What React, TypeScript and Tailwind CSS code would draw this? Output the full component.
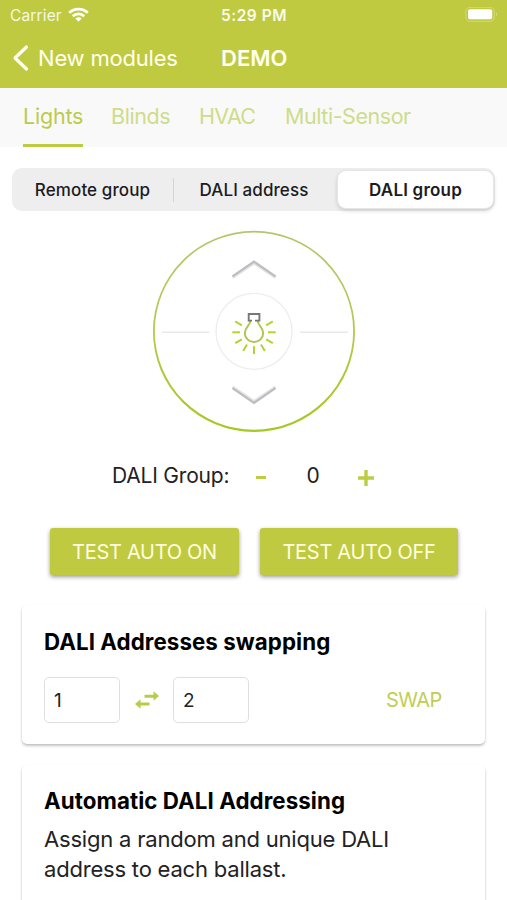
import React from "react";

function Rays() {
  const angles = [-30, 0, 30, 60, 90, 120, 150, 180, 210];
  return (
    <g stroke="#b9d12f" strokeWidth="2">
      {angles.map((a) => {
        const r = (a * Math.PI) / 180;
        return (
          <line
            key={a}
            x1={101 + 14 * Math.cos(r)}
            y1={102 + 14 * Math.sin(r)}
            x2={101 + 21.7 * Math.cos(r)}
            y2={102 + 21.7 * Math.sin(r)}
          />
        );
      })}
    </g>
  );
}

function Dial() {
  return (
    <svg width="204" height="204" viewBox="0 0 204 204" fill="none" className="block">
      <defs>
        <linearGradient id="ring" x1="0" y1="0" x2="0" y2="1">
          <stop offset="0" stopColor="#b4c66c" />
          <stop offset="0.5" stopColor="#b4ca50" />
          <stop offset="1" stopColor="#a6c820" />
        </linearGradient>
      </defs>
      <path
        fill="url(#ring)"
        fillRule="evenodd"
        d="M102 1.8a101 100.6 0 1 1 0 201.2a101 100.6 0 1 1 0-201.2zM102 3.5a99.2 98.6 0 1 0 0 197.2a99.2 98.6 0 1 0 0-197.2z"
      />
      <circle cx="102" cy="102.4" r="38" stroke="#ededed" strokeWidth="1.3" />
      <path d="M10 103.2H57.5M148 103.2H196" stroke="#e9e9e9" strokeWidth="1.4" />
      <path d="M80.5 48.5L102 34L123.5 48.5" stroke="#e3e3e5" strokeWidth="3" />
      <path d="M80.5 47.3L102 32.6L123.5 47.3" stroke="#bdbdc1" strokeWidth="2.2" />
      <path d="M80.5 158L102 172.6L123.5 158" stroke="#e3e3e5" strokeWidth="3" />
      <path d="M80.5 159.2L102 173.8L123.5 159.2" stroke="#bdbdc1" strokeWidth="2.2" />
      <g transform="translate(1 1.3)">
        <Rays />
        <path
          d="M97.4 90.5C97.4 95 91.8 97 91.8 102.6A9.2 9.2 0 0 0 110.2 102.6C110.2 97 104.6 95 104.6 90.5"
          stroke="#afc64f"
          strokeWidth="2"
        />
        <path d="M99 90.3H95.7V83.7H106.4V90.3H102" stroke="#77777b" strokeWidth="1.9" />
      </g>
    </svg>
  );
}

function StatusBar() {
  return (
    <div className="grid h-[30px] grid-cols-3 items-center pl-2.5 pr-[9px]">
      <div className="flex items-center gap-1.5 text-[15.5px] tracking-[0.15px] text-white/85">
        <span className="w-[52px] whitespace-nowrap pt-px">Carrier</span>
        <svg width="21" height="16" viewBox="0 0 21 16" fill="none" stroke="#fff" strokeWidth="2.7">
          <path d="M1.2 5.8C6.4 0.8 14.6 0.8 19.8 5.8" />
          <path d="M4.7 9.2C8 6.2 13 6.2 16.3 9.2" />
          <path d="M7.3 11.4C9.1 9.8 11.9 9.8 13.7 11.4L10.5 14.8Z" fill="#fff" stroke="none" />
        </svg>
      </div>
      <span className="whitespace-nowrap pt-px text-center text-[15.5px] font-semibold tracking-[0.5px] text-white/90">
        5:29 PM
      </span>
      <svg width="33" height="16" viewBox="0 0 33 16" fill="none" className="justify-self-end">
        <rect x="0.8" y="0.3" width="28.5" height="14" rx="4.2" stroke="#fff" strokeOpacity="0.3" />
        <rect x="3" y="2.3" width="24.2" height="10" rx="2" fill="#fff" />
        <path d="M31 5Q33 7.3 31 9.5Z" fill="#fff" fillOpacity="0.4" />
      </svg>
    </div>
  );
}

function Header() {
  return (
    <header className="h-[88px] bg-[#bfca40] text-[#fffff0]">
      <StatusBar />
      <div className="flex h-14 items-center pl-3">
        <svg width="17" height="28" viewBox="0 0 17 28" fill="none" stroke="#fffff4" strokeWidth="3.2" strokeLinecap="round" strokeLinejoin="round">
          <path d="M14.5 3L3 14L14.5 25" />
        </svg>
        <span className="ml-[9px] w-[183px] whitespace-nowrap text-[22px] tracking-[-0.2px]">New modules</span>
        <span className="whitespace-nowrap text-[22px] font-semibold">DEMO</span>
      </div>
    </header>
  );
}

function Tabs() {
  return (
    <nav className="flex h-[59px] bg-[#f9f9f9] pl-[23px] text-[21.5px] tracking-[-0.4px] text-[#cfdc89]">
      <span className="mr-7 flex w-[60px] items-center whitespace-nowrap border-b-3 border-[#bccb3f] pt-px tracking-[-0.2px] text-[#bccb4a]">
        Lights
      </span>
      <span className="flex w-[88px] items-center whitespace-nowrap pb-0.5">Blinds</span>
      <span className="flex w-[86px] items-center whitespace-nowrap pb-0.5 tracking-[-0.7px]">HVAC</span>
      <span className="flex items-center whitespace-nowrap pb-0.5 tracking-[-0.45px]">Multi-Sensor</span>
    </nav>
  );
}

function Segments() {
  return (
    <div className="mx-3 mt-[21px] flex h-[43px] items-center rounded-[10px] bg-[#eeeeef] text-[17px] font-medium tracking-[0.1px] text-[#1c1c1e]">
      <span className="w-[161px] whitespace-nowrap pt-0.5 text-center">Remote group</span>
      <span className="h-6 w-px bg-[#d4d4d6]" />
      <span className="w-40 whitespace-nowrap pt-0.5 text-center">DALI address</span>
      <span className="ml-[3px] flex h-[39px] w-[157px] items-center justify-center whitespace-nowrap rounded-[9px] border border-[#e6e6e6] bg-white pt-0.5 font-semibold tracking-[0.2px] shadow-[0_2px_4px_rgba(0,0,0,0.14)]">
        DALI group
      </span>
    </div>
  );
}

function SwapIcon() {
  return (
    <svg width="24" height="18" viewBox="0 0 24 18" fill="#b7cd45" className="block">
      <path d="M9.5 3.7H18.5V0.3L24 5.1L18.5 9.8V6.7H9.5Z" />
      <path d="M14.5 11.6H5.5V8.2L0 13L5.5 17.7V14.6H14.5Z" />
    </svg>
  );
}

const card = "mx-[22px] rounded-[5px] bg-white px-[22px] shadow-[0_2px_3px_rgba(0,0,0,0.2),0_1px_2px_rgba(0,0,0,0.08)]";
const heading = "whitespace-nowrap text-[22.3px] font-bold leading-[32px] tracking-[0.08px] text-black";
const button =
  "flex h-[47px] items-center justify-center whitespace-nowrap rounded-[3px] bg-[#bfca40] text-[20px] tracking-[-0.28px] text-[#fffde0] shadow-[0_2px_4px_rgba(0,0,0,0.4)]";
const field = "flex h-[46px] w-[76px] items-center rounded-[5px] border border-[#dfdfdf] pl-[9px] pt-0.5";

export default function App() {
  return (
    <div className="h-[900px] w-[507px] overflow-hidden bg-white font-['Inter','Liberation_Sans',sans-serif]">
      <Header />
      <Tabs />
      <Segments />
      <div className="mt-[18px] flex justify-center">
        <Dial />
      </div>
      <div className="mt-[23px] flex h-10 items-center pl-28 text-[21px] text-[#222]">
        <span className="w-[144px] whitespace-nowrap tracking-[-0.2px]">DALI Group:</span>
        <span className="mt-[3px] h-[3px] w-[10px] bg-[#bccd42]" />
        <span className="ml-[39px] w-4 text-center">0</span>
        <svg width="16" height="16" viewBox="0 0 16 16" className="ml-[37px] mt-[3px]" stroke="#bccd42" strokeWidth="3.4">
          <path d="M0 8H16M8 0V16" />
        </svg>
      </div>
      <div className="mt-8 flex gap-[21px] pl-[50px]">
        <div className={`w-[189px] ${button}`}>TEST AUTO ON</div>
        <div className={`w-[198px] ${button}`}>TEST AUTO OFF</div>
      </div>
      <section className={`mt-[30px] h-[139px] pt-[21px] ${card}`}>
        <h2 className={heading}>DALI Addresses swapping</h2>
        <div className="mt-[19px] flex items-center text-[19px] text-[#222]">
          <div className={field}>1</div>
          <div className="mx-[14.5px]">
            <SwapIcon />
          </div>
          <div className={field}>2</div>
          <span className="ml-[137px] whitespace-nowrap text-[20px] tracking-[-0.6px] text-[#bfce52]">SWAP</span>
        </div>
      </section>
      <section className={`mt-[21px] h-[200px] pt-[20px] ${card}`}>
        <h2 className={heading}>Automatic DALI Addressing</h2>
        <p className="mt-[7px] whitespace-nowrap text-[22px] leading-[30px] tracking-[-0.2px] text-[#222]">
          Assign a random and unique DALI
          <br />
          address to each ballast.
        </p>
      </section>
    </div>
  );
}
